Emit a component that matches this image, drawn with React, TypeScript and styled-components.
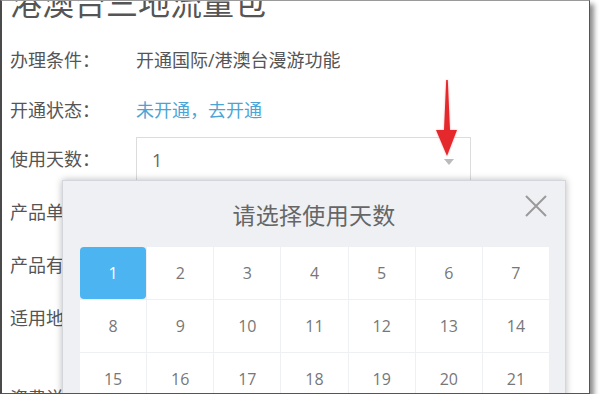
import { FC } from 'react'
import styled, { createGlobalStyle } from 'styled-components'

const GlobalStyle = createGlobalStyle`
	html, body {
		margin: 0;
		padding: 0;
		background: #fff;
	}
	body {
		font-family: 'Open Sans', 'Noto Sans CJK SC', sans-serif;
	}
`

const Shot = styled.div`
	position: relative;
	box-sizing: border-box;
	width: 590px;
	height: 394px;
	background: #fff;
	border-top: 1px solid #9a9a9a;
	border-left: 2px solid #4a4a4a;
	border-right: 1px solid #555;
	border-bottom: 1px solid #555;
	box-shadow: 4px 4px 5px rgba(0, 0, 0, 0.45);
	overflow: hidden;
`

const Page = styled.div`
	padding-left: 8px;
	color: #555;
`

const Title = styled.h1`
	margin: -14px 0 0;
	font-size: 32px;
	line-height: 32px;
	font-weight: 400;
	color: #555;
	white-space: nowrap;
`

const Form = styled.div`
	display: flex;
	flex-direction: column;
	margin-top: 16px;
`

const Row = styled.div<{ $h: number }>`
	display: flex;
	align-items: flex-start;
	height: ${(p) => p.$h}px;
`

const Label = styled.span<{ $line?: number }>`
	width: 126px;
	flex-shrink: 0;
	font-size: 18px;
	line-height: ${(p) => p.$line ?? 50}px;
	color: #555;
	white-space: nowrap;
`

const Value = styled.span<{ $link?: boolean }>`
	font-size: 18px;
	line-height: 50px;
	color: ${(p) => (p.$link ? '#4aa5d6' : '#555')};
	white-space: nowrap;
`

const Select = styled.div`
	box-sizing: border-box;
	display: flex;
	align-items: center;
	justify-content: space-between;
	width: 335px;
	height: 45px;
	margin-top: 2px;
	padding: 0 16px 0 15px;
	border: 1px solid #dcdcdc;
	font-size: 18px;
	color: #666;
`

const Caret = styled.span`
	width: 0;
	height: 0;
	margin-top: 4px;
	border-left: 5px solid transparent;
	border-right: 5px solid transparent;
	border-top: 6px solid #bbb;
`

const Arrow = styled.svg`
	position: absolute;
	left: 431px;
	top: 78px;
	filter: drop-shadow(0 0 1px rgba(230, 40, 40, 0.35));
`

const Modal = styled.div`
	position: absolute;
	left: 60px;
	top: 179px;
	width: 504px;
	height: 260px;
	box-sizing: border-box;
	background: #eef0f3;
	border: 1px solid #d3d6da;
	box-shadow: 0 0 7px rgba(0, 0, 0, 0.28);
`

const ModalHead = styled.div`
	position: relative;
	display: flex;
	align-items: center;
	justify-content: center;
	height: 66px;
`

const ModalTitle = styled.h2`
	margin: 0;
	font-size: 23px;
	font-weight: 400;
	color: #666;
	letter-spacing: 0.3px;
`

const Close = styled.button`
	position: absolute;
	right: 17px;
	top: 13px;
	width: 24px;
	height: 24px;
	padding: 0;
	border: 0;
	background: none;
	display: flex;
	align-items: center;
	justify-content: center;
`

const DayGrid = styled.div`
	display: grid;
	grid-template-columns: repeat(7, 1fr);
	grid-auto-rows: 52px;
	gap: 1px;
	margin: 0 16px 0 17px;
`

const Day = styled.div<{ $active?: boolean }>`
	display: flex;
	align-items: center;
	justify-content: center;
	font-size: 16px;
	color: ${(p) => (p.$active ? '#fff' : '#777')};
	background: ${(p) => (p.$active ? '#4db4f2' : '#fff')};
	border-radius: ${(p) => (p.$active ? '4px' : '0')};
`

const days = Array.from({ length: 21 }, (_, i) => i + 1)

const App: FC = () => {
	return (
		<>
			<GlobalStyle />
			<Shot>
				<Page>
					<Title>港澳台三地流量包</Title>
					<Form>
						<Row $h={50}>
							<Label>办理条件：</Label>
							<Value>开通国际/港澳台漫游功能</Value>
						</Row>
						<Row $h={50}>
							<Label>开通状态：</Label>
							<Value $link>未开通，去开通</Value>
						</Row>
						<Row $h={50}>
							<Label $line={48}>使用天数：</Label>
							<Select>
								<span>1</span>
								<Caret />
							</Select>
						</Row>
						<Row $h={54}>
							<Label $line={54}>产品单价：</Label>
						</Row>
						<Row $h={52}>
							<Label $line={52}>产品有效：</Label>
						</Row>
						<Row $h={81}>
							<Label $line={54}>适用地区：</Label>
						</Row>
						<Row $h={52}>
							<Label $line={52}>资费说明：</Label>
						</Row>
					</Form>
				</Page>

				<Arrow width="28" height="80" viewBox="0 0 28 80">
					<polygon points="13.2,1 14.8,1 17,51 24,51 14,77 3,51 11,51" fill="#e5282c" />
				</Arrow>

				<Modal>
					<ModalHead>
						<ModalTitle>请选择使用天数</ModalTitle>
						<Close aria-label="close">
							<svg width="22" height="22" viewBox="0 0 22 22">
								<path d="M1 1 L21 21 M21 1 L1 21" stroke="#9a9a9a" strokeWidth="2" />
							</svg>
						</Close>
					</ModalHead>
					<DayGrid>
						{days.map((d) => (
							<Day key={d} $active={d === 1}>
								{d}
							</Day>
						))}
					</DayGrid>
				</Modal>
			</Shot>
		</>
	)
}

export default App
